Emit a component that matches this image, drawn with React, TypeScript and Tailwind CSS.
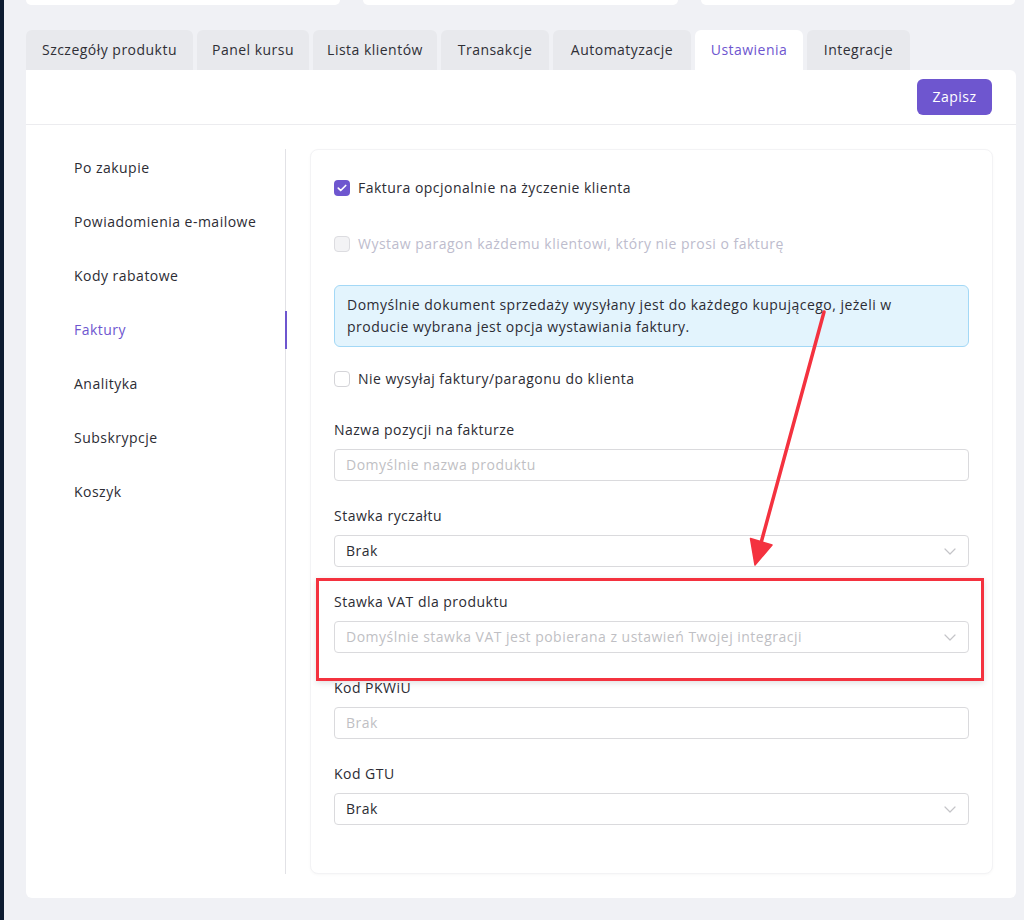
import React from 'react';

const tabs = [
  { name: 'Szczegóły produktu', w: 'w-[167px]' },
  { name: 'Panel kursu', w: 'w-[112px]' },
  { name: 'Lista klientów', w: 'w-[124px]' },
  { name: 'Transakcje', w: 'w-[108px]' },
  { name: 'Automatyzacje', w: 'w-[138px]' },
  { name: 'Ustawienia', w: 'w-[108px]' },
  { name: 'Integracje', w: 'w-[103px]' },
];

const menu = [
  'Po zakupie',
  'Powiadomienia e-mailowe',
  'Kody rabatowe',
  'Faktury',
  'Analityka',
  'Subskrypcje',
  'Koszyk',
];

const Chevron = () => (
  <svg width="12" height="7" viewBox="0 0 12 7" fill="none" className="shrink-0">
    <path d="M1 1l5 5 5-5" stroke="#c4c4c8" strokeWidth="1.2" strokeLinecap="round" strokeLinejoin="round" />
  </svg>
);

const Checkbox: React.FC<{ checked?: boolean; disabled?: boolean; label: string }> = ({ checked, disabled, label }) => (
  <label className="flex h-7 items-center gap-2">
    {checked ? (
      <span className="flex h-4 w-4 items-center justify-center rounded-[4px] bg-[#6e56cf]">
        <svg width="10" height="8" viewBox="0 0 10 8" fill="none">
          <path d="M1.3 4.1l2.4 2.4L8.7 1.5" stroke="white" strokeWidth="1.7" strokeLinecap="round" strokeLinejoin="round" />
        </svg>
      </span>
    ) : (
      <span
        className={
          disabled
            ? 'h-4 w-4 rounded-[4px] border border-[#dcdce0] bg-[#f3f3f5]'
            : 'h-4 w-4 rounded-[4px] border border-[#d4d4d8] bg-white'
        }
      />
    )}
    <span className={disabled ? 'text-sm text-[#bdbccd]' : 'text-sm text-[#2c2c34]'}>{label}</span>
  </label>
);

const Field: React.FC<{ label: string; value?: string; placeholder?: string; select?: boolean }> = ({
  label,
  value,
  placeholder,
  select,
}) => (
  <div className="flex flex-col">
    <div className="mb-[9px] h-5 text-sm leading-5 text-[#2c2c34]">{label}</div>
    <div className="flex h-8 items-center justify-between rounded-[4px] border border-[#dadadd] bg-white pl-[11px] pr-3">
      {value ? (
        <span className="text-sm text-[#2c2c34]">{value}</span>
      ) : (
        <span className="text-sm text-[#bfbfc4]">{placeholder}</span>
      )}
      {select && <Chevron />}
    </div>
  </div>
);

export default function App() {
  return (
    <div className="relative flex h-[920px] w-full overflow-hidden bg-[#f0f1f5] font-['Open_Sans',sans-serif] tracking-[0.03em]">
      <div className="w-[4px] shrink-0 bg-[#0e1c31]" />

      <div className="flex flex-1 flex-col pl-[22px] pr-[8px]">
        {/* top cards, scrolled out of view */}
        <div className="grid w-[989px] grid-cols-3 gap-[23px]">
          <div className="h-[5px] rounded-b-md bg-white" />
          <div className="h-[5px] rounded-b-md bg-white" />
          <div className="h-[5px] rounded-b-md bg-white" />
        </div>

        {/* tabs */}
        <div className="mt-[25px] flex h-10 gap-1">
          {tabs.map((t) => (
            <div
              key={t.name}
              className={
                t.name === 'Ustawienia'
                  ? `flex ${t.w} items-center justify-center rounded-t-md bg-white text-sm text-[#6e56cf]`
                  : `flex ${t.w} items-center justify-center rounded-t-md bg-[#e8e9ed] text-sm text-[#2f2f36]`
              }
            >
              {t.name}
            </div>
          ))}
        </div>

        {/* main card */}
        <div className="flex flex-col rounded-b-md rounded-tr-md bg-white">
          <div className="flex h-[55px] items-center justify-end border-b border-[#ececef] pr-6">
            <button className="h-9 w-[75px] rounded-md bg-[#6e56cf] text-sm text-white">Zapisz</button>
          </div>

          <div className="flex py-6 pr-[23px]">
            {/* side menu */}
            <div className="w-[260px] shrink-0 border-r border-[#e2e2e6]">
              <div className="flex flex-col gap-4">
                {menu.map((m) => (
                  <div key={m} className="relative flex h-[38px] items-center pl-12">
                    <span className={m === 'Faktury' ? 'text-sm text-[#6e56cf]' : 'text-sm text-[#2c2c34]'}>{m}</span>
                    {m === 'Faktury' && <span className="absolute right-[-1.5px] top-0 h-full w-[2px] bg-[#6e56cf]" />}
                  </div>
                ))}
              </div>
            </div>

            {/* form panel */}
            <div className="ml-6 flex-1 rounded-lg border border-[#f3f3f5] bg-white px-[23px] pb-12 pt-6 shadow-[0_1px_3px_rgba(0,0,0,0.03)]">
              <Checkbox checked label="Faktura opcjonalnie na życzenie klienta" />
              <div className="mt-7">
                <Checkbox disabled label="Wystaw paragon każdemu klientowi, który nie prosi o fakturę" />
              </div>

              <div className="mt-[27px] rounded-md border border-[#a3d8f6] bg-[#e3f4fd] px-3 py-[8px] text-sm leading-[22px] text-[#2c2c34]">
                Domyślnie dokument sprzedaży wysyłany jest do każdego kupującego, jeżeli w
                <br />
                producie wybrana jest opcja wystawiania faktury.
              </div>

              <div className="mt-[18px]">
                <Checkbox label="Nie wysyłaj faktury/paragonu do klienta" />
              </div>

              <div className="mt-[27px] flex flex-col gap-[25px]">
                <Field label="Nazwa pozycji na fakturze" placeholder="Domyślnie nazwa produktu" />
                <Field label="Stawka ryczałtu" value="Brak" select />
                <div className="relative">
                  <Field
                    label="Stawka VAT dla produktu"
                    placeholder="Domyślnie stawka VAT jest pobierana z ustawień Twojej integracji"
                    select
                  />
                  <div className="pointer-events-none absolute -bottom-[28px] -left-[18px] -right-[15px] -top-[14px] border-[3px] border-[#f4323f] shadow-[0_2px_6px_rgba(0,0,0,0.12)]" />
                </div>
                <Field label="Kod PKWiU" placeholder="Brak" />
                <Field label="Kod GTU" value="Brak" select />
              </div>
            </div>
          </div>
        </div>
      </div>

      {/* annotation arrow */}
      <svg className="pointer-events-none absolute left-0 top-0" width="1024" height="920" viewBox="0 0 1024 920">
        <line x1="824" y1="312" x2="761" y2="543" stroke="#f4323f" strokeWidth="3.5" strokeLinecap="round" />
        <polygon points="755,565 750.5,538.5 772,545" fill="#f4323f" stroke="#f4323f" strokeWidth="1.5" strokeLinejoin="round" />
      </svg>
    </div>
  );
}
